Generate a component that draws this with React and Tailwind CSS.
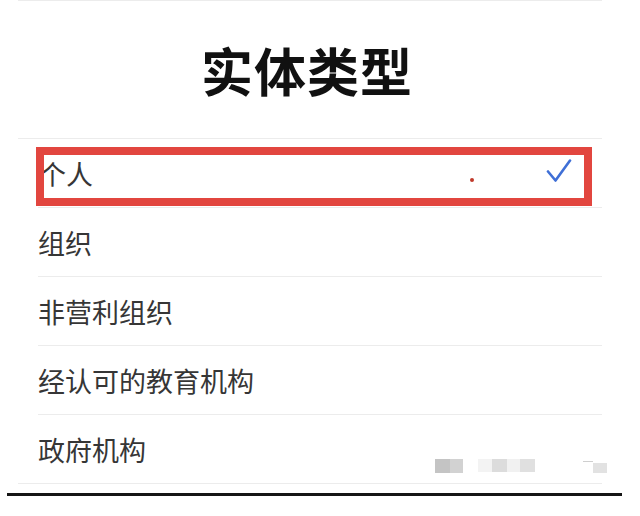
import React from 'react';

const options = ['个人', '组织', '非营利组织', '经认可的教育机构', '政府机构'];

const Check = () => (
  <svg width="26" height="24" viewBox="0 0 26 24" fill="none">
    <path d="M2 12.5 L9.5 21.5 L24 1.5" stroke="#3f6fd6" strokeWidth="2.6" strokeLinecap="round" strokeLinejoin="round" />
  </svg>
);

export default function App() {
  return (
    <div
      className="relative w-[640px] h-[516px] bg-white overflow-hidden"
      style={{ fontFamily: '"Noto Sans CJK SC", "Noto Sans", sans-serif' }}
    >
      {/* top divider */}
      <div className="ml-[18px] w-[584px] h-px bg-[#ececec]" />

      {/* title */}
      <div className="ml-[18px] w-[584px] h-[137px] flex items-center justify-center pr-[6px]">
        <h1 className="text-[52px] leading-none font-bold text-[#111] tracking-[1px]">实体类型</h1>
      </div>

      {/* options list */}
      <div className="ml-[18px] w-[584px] border-t border-[#ececec]">
        <div className="h-[68px] pl-[21px] flex items-center justify-between">
          <span className="text-[27px] leading-none text-[#363636]">{options[0]}</span>
          <div className="mr-[30px] mt-[-4px]">
            <Check />
          </div>
        </div>
        {options.slice(1).map((name) => (
          <div key={name} className="pl-[20px]">
            <div className="h-[69px] border-t border-[#ececec] flex items-center">
              <span className="text-[27px] leading-none text-[#363636]">{name}</span>
            </div>
          </div>
        ))}
        <div className="h-px bg-[#ececec]" />
      </div>

      {/* bottom black rule */}
      <div className="mt-[9px] ml-[7px] w-[615px] h-[3px] bg-[#151515]" />

      {/* red annotation box */}
      <div className="absolute left-[36px] top-[147px] w-[556px] h-[59px] border-[8px] border-[#e2463f]" />
      <div className="absolute left-[470px] top-[178px] w-[4px] h-[4px] rounded-full bg-[#c0392b]" />

      {/* blurred watermark */}
      <div className="absolute left-[435px] top-[459px] flex items-start">
        <div className="w-[15px] h-[14px] bg-[#c4c4c4]" />
        <div className="w-[13px] h-[14px] bg-[#d2d2d2]" />
        <div className="ml-[15px] w-[14px] h-[13px] bg-[#f3f3f3]" />
        <div className="w-[15px] h-[13px] bg-[#dcdcdc]" />
        <div className="w-[13px] h-[13px] bg-[#f1f1f1]" />
        <div className="w-[15px] h-[13px] bg-[#e0e0e0]" />
        <div className="ml-[48px] mt-[2px] w-[10px] h-px bg-[#cfcfcf]" />
        <div className="mt-[4px] w-[14px] h-[10px] bg-[#e2e2e2]" />
      </div>
    </div>
  );
}
